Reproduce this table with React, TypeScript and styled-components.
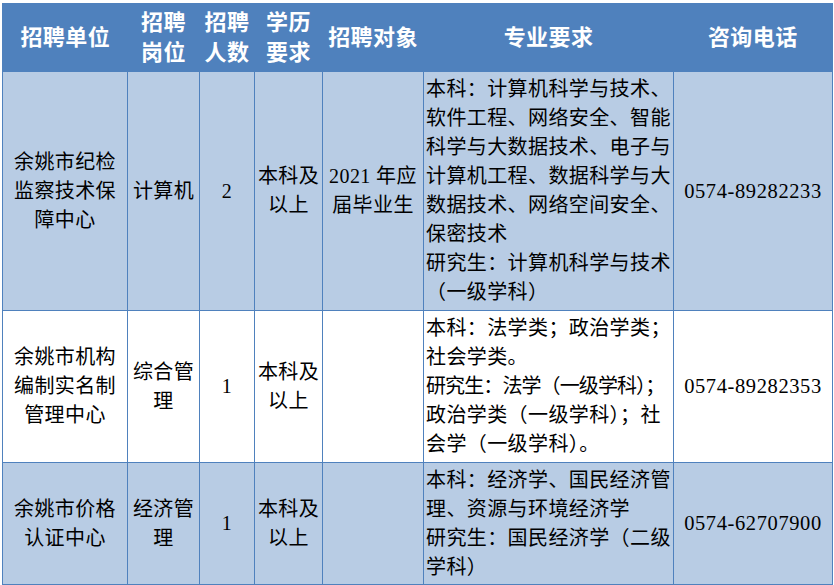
import React from 'react'
import styled, { createGlobalStyle } from 'styled-components'

const GlobalStyle = createGlobalStyle`
  html, body {
    margin: 0;
    padding: 0;
    background: #ffffff;
  }
  body {
    font-family: "Liberation Serif", "Noto Sans CJK SC", serif;
  }
`

const Page = styled.div`
  padding: 3px 0 0 2px;
`

const Table = styled.table`
  border-collapse: collapse;
  table-layout: fixed;
  width: 830px;
  border: 1px solid #4f81bd;
`

const HeadRow = styled.tr`
  height: 68px;
  background: #4f81bd;
`

const HeadCell = styled.th`
  padding: 0;
  color: #ffffff;
  font-family: "Liberation Serif", "Noto Sans CJK SC", serif;
  font-size: 22px;
  font-weight: 700;
  line-height: 30px;
  letter-spacing: 0.4px;
  text-align: center;
  vertical-align: middle;
  border: none;
`

const Row = styled.tr<{ $shade: boolean; $h: number }>`
  height: ${(p) => p.$h}px;
  background: ${(p) => (p.$shade ? '#b8cce4' : '#ffffff')};
`

const Cell = styled.td<{ $left?: boolean }>`
  padding: ${(p) => (p.$left ? '0 0 0 2px' : '0')};
  color: #000000;
  font-size: 20px;
  line-height: 29px;
  letter-spacing: 0.4px;
  text-align: ${(p) => (p.$left ? 'left' : 'center')};
  vertical-align: middle;
  border: 1px solid #4f81bd;
  white-space: nowrap;
  overflow: hidden;
`

const Line = styled.div<{ $tight?: boolean }>`
  letter-spacing: ${(p) => (p.$tight ? '-0.9px' : 'inherit')};
`

const Phone = styled.span`
  font-size: 20.5px;
  letter-spacing: 0.6px;
`

type Job = {
  unit: string[]
  post: string[]
  count: string
  edu: string[]
  target: string[]
  spec: { text: string; tight?: boolean }[]
  phone: string
  height: number
}

const jobs: Job[] = [
  {
    unit: ['余姚市纪检', '监察技术保', '障中心'],
    post: ['计算机'],
    count: '2',
    edu: ['本科及', '以上'],
    target: ['2021 年应', '届毕业生'],
    spec: [
      { text: '本科：计算机科学与技术、' },
      { text: '软件工程、网络安全、智能' },
      { text: '科学与大数据技术、电子与' },
      { text: '计算机工程、数据科学与大' },
      { text: '数据技术、网络空间安全、' },
      { text: '保密技术' },
      { text: '研究生：计算机科学与技术' },
      { text: '（一级学科）' }
    ],
    phone: '0574-89282233',
    height: 239
  },
  {
    unit: ['余姚市机构', '编制实名制', '管理中心'],
    post: ['综合管', '理'],
    count: '1',
    edu: ['本科及', '以上'],
    target: [],
    spec: [
      { text: '本科：法学类；政治学类；' },
      { text: '社会学类。' },
      { text: '研究生：法学（一级学科）；', tight: true },
      { text: '政治学类（一级学科）；社' },
      { text: '会学（一级学科）。' }
    ],
    phone: '0574-89282353',
    height: 152
  },
  {
    unit: ['余姚市价格', '认证中心'],
    post: ['经济管', '理'],
    count: '1',
    edu: ['本科及', '以上'],
    target: [],
    spec: [
      { text: '本科：经济学、国民经济管' },
      { text: '理、资源与环境经济学' },
      { text: '研究生：国民经济学（二级' },
      { text: '学科）' }
    ],
    phone: '0574-62707900',
    height: 122
  }
]

const lines = (items: string[]) => items.map((t, i) => <Line key={i}>{t}</Line>)

export default function App() {
  return (
    <Page>
      <GlobalStyle />
      <Table>
        <colgroup>
          <col style={{ width: 125 }} />
          <col style={{ width: 72 }} />
          <col style={{ width: 55 }} />
          <col style={{ width: 68 }} />
          <col style={{ width: 101 }} />
          <col style={{ width: 250 }} />
          <col style={{ width: 159 }} />
        </colgroup>
        <thead>
          <HeadRow>
            <HeadCell>招聘单位</HeadCell>
            <HeadCell>招聘<br />岗位</HeadCell>
            <HeadCell>招聘<br />人数</HeadCell>
            <HeadCell>学历<br />要求</HeadCell>
            <HeadCell>招聘对象</HeadCell>
            <HeadCell>专业要求</HeadCell>
            <HeadCell>咨询电话</HeadCell>
          </HeadRow>
        </thead>
        <tbody>
          {jobs.map((job, i) => (
            <Row key={job.phone} $shade={i !== 1} $h={job.height}>
              <Cell>{lines(job.unit)}</Cell>
              <Cell>{lines(job.post)}</Cell>
              <Cell>{job.count}</Cell>
              <Cell>{lines(job.edu)}</Cell>
              <Cell>{lines(job.target)}</Cell>
              <Cell $left>
                {job.spec.map((s, k) => (
                  <Line key={k} $tight={s.tight}>{s.text}</Line>
                ))}
              </Cell>
              <Cell>
                <Phone>{job.phone}</Phone>
              </Cell>
            </Row>
          ))}
        </tbody>
      </Table>
    </Page>
  )
}
